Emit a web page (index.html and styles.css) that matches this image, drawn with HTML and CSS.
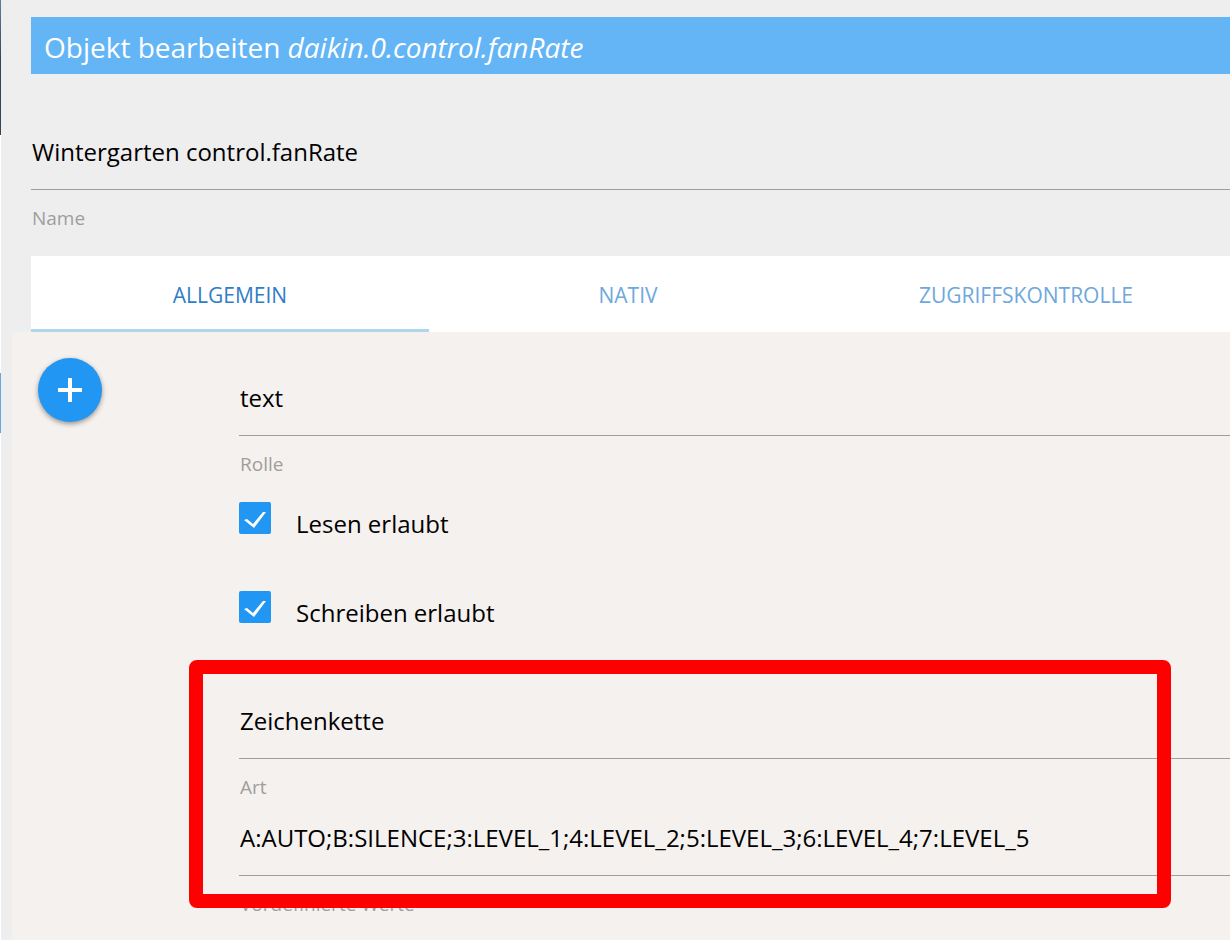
FILE: index.html
```
<!DOCTYPE html>
<html lang="de">
<head>
  <meta charset="UTF-8">
  <title>Objekt bearbeiten</title>
  <link rel="stylesheet" href="styles.css">
</head>
<body>
  <div class="page-edge"></div>
  <main class="dialog">
    <div class="dialog-head">
      <h1 class="title">Objekt bearbeiten <em>daikin.0.control.fanRate</em></h1>

      <div class="field">
        <input type="text" id="name" value="Wintergarten control.fanRate">
        <label for="name">Name</label>
      </div>

      <nav class="tabs">
        <a href="#common" class="active">Allgemein</a>
        <a href="#native">Nativ</a>
        <a href="#acl">Zugriffskontrolle</a>
      </nav>
    </div>

    <section class="panel" id="common">
      <button type="button" class="btn-add" aria-label="Neu">
        <svg width="24" height="24" viewBox="0 0 24 24"><path d="M10 0h4v10h10v4H14v10h-4V14H0v-4h10z" fill="#fff"/></svg>
      </button>

      <form class="fields">
        <div class="field">
          <input type="text" id="role" value="text">
          <label for="role">Rolle</label>
        </div>

        <div class="check">
          <input type="checkbox" id="read" checked>
          <label for="read">Lesen erlaubt</label>
        </div>
        <div class="check">
          <input type="checkbox" id="write" checked>
          <label for="write">Schreiben erlaubt</label>
        </div>

        <div class="marked">
          <div class="field">
            <select id="type">
              <option>Zeichenkette</option>
            </select>
            <label for="type">Art</label>
          </div>
          <div class="field">
            <input type="text" id="states" value="A:AUTO;B:SILENCE;3:LEVEL_1;4:LEVEL_2;5:LEVEL_3;6:LEVEL_4;7:LEVEL_5">
            <label for="states">Vordefinierte Werte</label>
          </div>
          <div class="marker"></div>
        </div>
      </form>
    </section>
  </main>
</body>
</html>
```
FILE: styles.css
```
* {
  box-sizing: border-box;
}

body {
  margin: 0;
  min-height: 100vh;
  display: flex;
  background: #eee;
  color: #000;
  font-family: "Open Sans", "Noto Sans", sans-serif;
  font-size: 24px;
}

/* strip of the page behind the dialog */
.page-edge {
  flex: 0 0 1px;
  background: linear-gradient(#5f7f9f 0, #33475b 60px, #33475b 135px, #fff 135px, #fff 373px, #64a9d8 373px, #64a9d8 433px, #fff 433px);
}

.dialog {
  flex: 1;
  min-width: 0;
  display: flex;
  flex-direction: column;
  padding-top: 17px;
}

.dialog-head {
  padding-left: 30px;
}

.title {
  margin: 0 0 41px;
  padding: 12px 13px 9px;
  background: #64b5f6;
  color: #fff;
  font-size: 28px;
  font-weight: 400;
  line-height: 36px;
}

.field input,
.field select {
  display: block;
  width: 100%;
  height: 75px;
  margin: 0;
  padding: 0 0 2px 1px;
  border: 0;
  border-bottom: 1px solid #9e9e9e;
  border-radius: 0;
  background: transparent;
  color: #000;
  font: inherit;
  outline: none;
  appearance: none;
}

.field label {
  display: block;
  padding: 14px 0 0 1px;
  color: #9e9e9e;
  font-size: 19px;
  line-height: 28px;
}

.tabs {
  display: flex;
  margin-top: 24px;
  padding-right: 5px;
  background: #fff;
}

.tabs a {
  flex: 1;
  height: 76px;
  border-bottom: 3px solid transparent;
  color: #6ea8dc;
  font-size: 21px;
  line-height: 78px;
  text-align: center;
  text-decoration: none;
  text-transform: uppercase;
}

.tabs a.active {
  border-bottom-color: #aed6ec;
  color: #2e7dc8;
}

.panel {
  flex: 1;
  display: flex;
  align-items: flex-start;
  gap: 137px;
  margin-left: 11px;
  padding: 26px 0 0 26px;
  background: #f5f1ee;
}

.btn-add {
  flex: 0 0 64px;
  height: 64px;
  display: flex;
  align-items: center;
  justify-content: center;
  padding: 0;
  border: 0;
  border-radius: 50%;
  background: #2196f3;
  box-shadow: 0 2px 5px rgba(0,0,0,0.4);
  cursor: pointer;
}

.fields {
  flex: 1;
  min-width: 0;
  padding-top: 3px;
}

.check {
  display: flex;
  align-items: flex-start;
  gap: 25px;
  padding: 24px 0 27px;
}

.check input {
  width: 32px;
  height: 32px;
  margin: 0;
  border-radius: 2px;
  background: #2196f3;
  appearance: none;
}

.check input:checked::before {
  content: "";
  display: block;
  width: 32px;
  height: 32px;
  background: #fff;
  clip-path: polygon(5px 18px, 8px 17px, 14px 22px, 24px 10px, 27px 10px, 15px 26px);
}

.check label {
  padding-top: 6px;
  line-height: 32px;
}

.marked {
  position: relative;
  margin-top: 28px;
}

.marker {
  position: absolute;
  top: -24px;
  right: 59px;
  bottom: 10px;
  left: -50px;
  border: 14px solid #f00;
  border-radius: 8px;
  pointer-events: none;
}
```
